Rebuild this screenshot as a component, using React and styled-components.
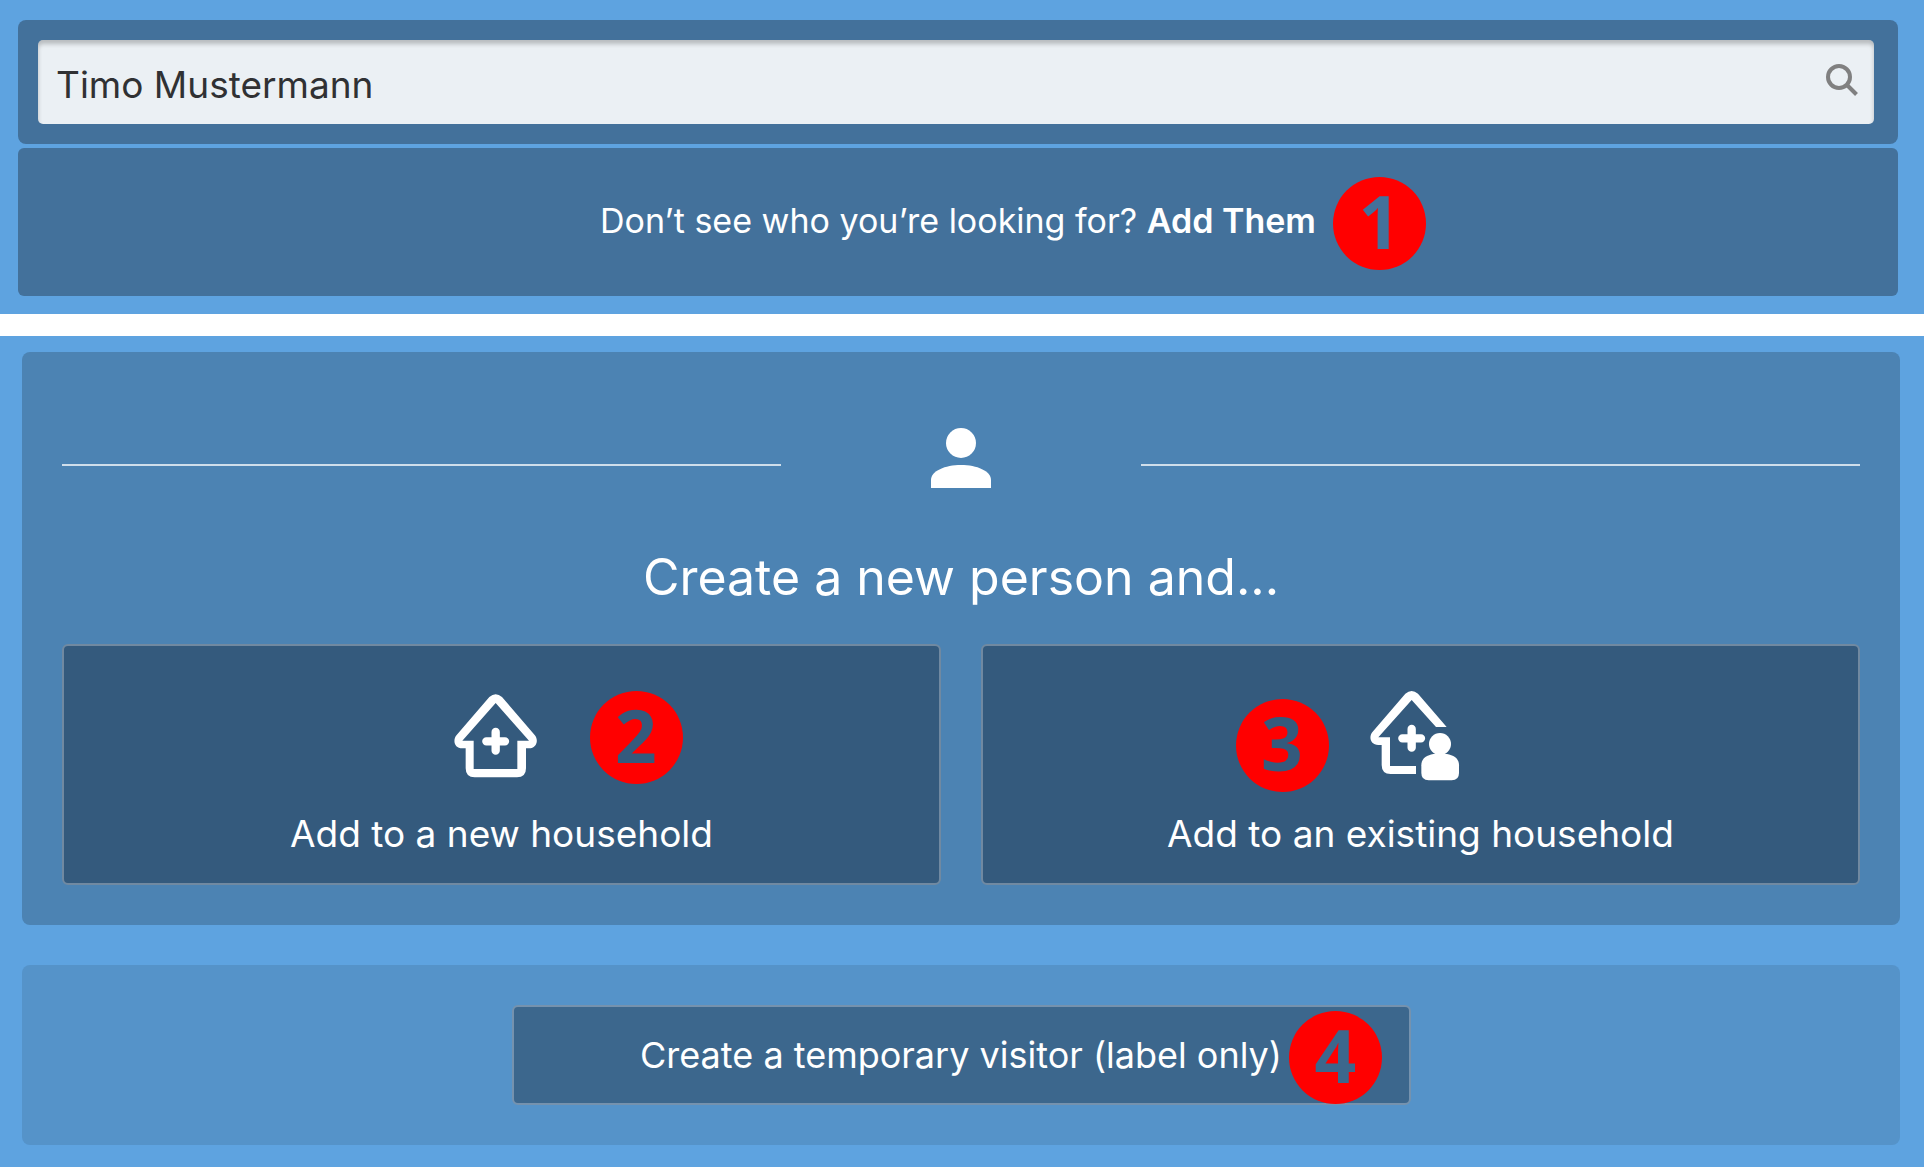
import React from "react";
import styled, { createGlobalStyle } from "styled-components";

const GlobalStyle = createGlobalStyle`
  *, *::before, *::after { box-sizing: border-box; }
  body {
    margin: 0;
    background: #fff;
    color: #fff;
    font-family: Inter, "Liberation Sans", sans-serif;
  }
  button, input { font: inherit; color: inherit; }
`;

const Page = styled.main`
  display: flex;
  flex-direction: column;
  gap: 22px;
`;

const Section = styled.section`
  display: flex;
  flex-direction: column;
  gap: ${(p) => p.$gap}px;
  padding: ${(p) => p.$padding};
  background: #5ea3e0;
`;

const SearchPanel = styled.form`
  padding: 20px 24px 20px 20px;
  border-radius: 8px;
  background: #43719b;
`;

const SearchField = styled.div`
  display: flex;
  height: 84px;
  border-radius: 5px;
  background: #ebf0f4;
  box-shadow: inset 0 4px 4px rgba(0, 0, 0, 0.22);
  color: #303133;
`;

const SearchInput = styled.input`
  flex: 1;
  min-width: 0;
  padding: 4px 18px 0;
  border: 0;
  background: transparent;
  font-size: 37px;
  outline: none;
`;

const SearchButton = styled.button`
  display: flex;
  align-items: center;
  padding: 0 16px 4px;
  border: 0;
  background: transparent;
  color: #808080;
`;

const EmptyPanel = styled.div`
  display: flex;
  align-items: center;
  justify-content: center;
  height: 148px;
  padding-bottom: 2px;
  border-radius: 6px;
  background: #43719b;
  font-size: 34px;
  line-height: 48px;
`;

const EmptyText = styled.p`
  margin: 0;
`;

const AddLink = styled.a`
  position: relative;
  color: inherit;
  font-weight: 600;
  text-decoration: none;
`;

const Badge = styled.span`
  position: absolute;
  top: calc(50% + ${(p) => p.$drop}px);
  left: calc(100% + ${(p) => p.$offset}px);
  display: flex;
  align-items: center;
  justify-content: center;
  width: 93px;
  height: 93px;
  margin-top: -46px;
  padding-bottom: 6px;
  border-radius: 50%;
  background: #f00;
  color: ${(p) => p.$ink};
  font: 700 73px/93px "Noto Sans", "Open Sans", sans-serif;
`;

const CreatePanel = styled.div`
  padding: 75px 40px 40px;
  border-radius: 8px;
  background: #4c83b3;
`;

const Divider = styled.div`
  display: grid;
  grid-template-columns: 2fr 1fr 2fr;
  align-items: center;
  justify-items: center;
`;

const Rule = styled.hr`
  width: 100%;
  height: 2px;
  margin: 0;
  border: 0;
  background: #cfdeeb;
`;

const Heading = styled.h1`
  margin: 42px 0 35px;
  font-size: 50px;
  font-weight: 400;
  line-height: 64px;
  text-align: center;
`;

const Choices = styled.div`
  display: grid;
  grid-template-columns: 1fr 1fr;
  gap: 40px;
`;

const ChoiceButton = styled.button`
  display: flex;
  flex-direction: column;
  align-items: center;
  gap: 25px;
  padding: 39px 24px 25px;
  border: 2px solid #7089a1;
  border-radius: 6px;
  background: #345a7d;
  font-size: 37px;
  line-height: 48px;
`;

const IconFrame = styled.span`
  position: relative;
  display: flex;
`;

const VisitorPanel = styled.div`
  display: flex;
  justify-content: center;
  padding: 40px;
  border-radius: 8px;
  background: #5593c9;
`;

const VisitorButton = styled.button`
  width: 50%;
  height: 100px;
  border: 2px solid #7592ae;
  border-radius: 6px;
  background: #3c678d;
  font-size: 36px;
  line-height: 48px;
`;

const VisitorLabel = styled.span`
  position: relative;
`;

const SearchIcon = () => (
  <svg width="32" height="32" viewBox="0 0 32 32" fill="none" stroke="currentColor" strokeWidth="4" aria-hidden="true">
    <circle cx="13" cy="13" r="11" />
    <path d="M21 21l9.500 9.500" />
  </svg>
);

const PersonIcon = () => (
  <svg width="60" height="76" viewBox="0 0 60 76" fill="#fff" aria-hidden="true">
    <circle cx="30" cy="16" r="15" />
    <path d="M0 61V53C0 44 14 38 30 38S60 44 60 53V61Z" />
  </svg>
);

const NewHouseIcon = () => (
  <svg width="108" height="100" viewBox="84 73 324 300" fill="#fff" aria-hidden="true">
    <path
      fillRule="evenodd"
      d="M208 109Q227 93 246 109L344 223C357 238 350 263 327 263H318V323Q318 350 291 350H164Q137 350 137 323V263H127C103 263 97 238 110 223ZM227 127L127 240H161V325H292V240H327Z"
    />
    <path d="M227 214V270M199 242H255" stroke="#fff" strokeWidth="25" strokeLinecap="round" />
  </svg>
);

const ExistingHouseIcon = () => (
  <svg width="108" height="100" viewBox="441 74 324 300" fill="#fff" aria-hidden="true">
    <path d="M588 341H512Q485 341 485 314V254H475C451 254 445 229 458 214L556 100Q575 84 594 100L680 200H648L575 119L475 231H510V317H588Z" />
    <path d="M575 206V262M547 234H603" stroke="#fff" strokeWidth="25" strokeLinecap="round" />
    <circle cx="660" cy="251" r="33" />
    <path d="M640 281H681C700 286 717 292 717 315V338Q717 360 695 360H626Q604 360 604 338V315C604 292 621 286 640 281Z" />
  </svg>
);

export default function App() {
  return (
    <>
      <GlobalStyle />
      <Page>
        <Section $gap={4} $padding="20px 26px 18px 18px">
          <SearchPanel onSubmit={(e) => e.preventDefault()}>
            <SearchField>
              <SearchInput type="text" aria-label="Search for a person" defaultValue="Timo Mustermann" />
              <SearchButton type="submit" aria-label="Search">
                <SearchIcon />
              </SearchButton>
            </SearchField>
          </SearchPanel>
          <EmptyPanel>
            <EmptyText>
              Don’t see who you’re looking for?{" "}
              <AddLink href="#add">
                Add Them
                <Badge $offset={17} $drop={2} $ink="#43719b">1</Badge>
              </AddLink>
            </EmptyText>
          </EmptyPanel>
        </Section>
        <Section $gap={40} $padding="16px 24px 22px 22px">
          <CreatePanel>
            <Divider>
              <Rule />
              <PersonIcon />
              <Rule />
            </Divider>
            <Heading>Create a new person and...</Heading>
            <Choices>
              <ChoiceButton type="button">
                <IconFrame>
                  <NewHouseIcon />
                  <Badge $offset={34} $drop={2} $ink="#345a7d">2</Badge>
                </IconFrame>
                Add to a new household
              </ChoiceButton>
              <ChoiceButton type="button">
                <IconFrame>
                  <ExistingHouseIcon />
                  <Badge $offset={-239} $drop={10} $ink="#345a7d">3</Badge>
                </IconFrame>
                Add to an existing household
              </ChoiceButton>
            </Choices>
          </CreatePanel>
          <VisitorPanel>
            <VisitorButton type="button">
              <VisitorLabel>
                Create a temporary visitor (label only)
                <Badge $offset={7} $drop={2} $ink="#3c678d">4</Badge>
              </VisitorLabel>
            </VisitorButton>
          </VisitorPanel>
        </Section>
      </Page>
    </>
  );
}
